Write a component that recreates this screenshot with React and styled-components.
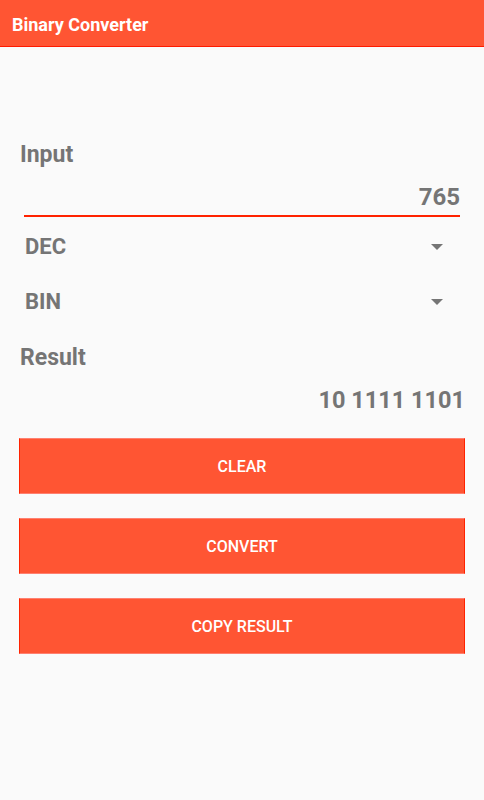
import React from "react";
import styled, { createGlobalStyle } from "styled-components";

const Global = createGlobalStyle`
  html, body { margin: 0; padding: 0; background: #fafafa; }
  body { font-family: Roboto, "Noto Sans", sans-serif; }
  #root { min-height: 800px; background: #fafafa; }
`;

const AppBar = styled.header`
  height: 47px;
  background: #ff5533;
  border-bottom: 1px solid #ff1a00;
  display: flex;
  align-items: center;
  padding: 2px 0 0 12px;
  color: #fff;
  font-size: 18px;
  font-weight: 700;
  box-sizing: border-box;
`;

const Content = styled.main`
  display: flex;
  flex-direction: column;
  padding: 94px 19px 0 19px;
`;

const Label = styled.div`
  color: #757575;
  font-size: 23px;
  font-weight: 700;
  line-height: 28px;
  padding-left: 1px;
  margin-top: ${(p) => p.$top || 0}px;
`;

const InputField = styled.div`
  margin: 14px 5px 2px 5px;
  padding-bottom: 4px;
  border-bottom: 2px solid #ff2200;
  text-align: right;
  color: #757575;
  font-size: 24px;
  font-weight: 700;
  line-height: 28px;
`;

const SelectRow = styled.div`
  display: flex;
  align-items: center;
  justify-content: space-between;
  height: 55px;
  padding: 0 22px 0 6px;
  color: #757575;
  font-size: 22px;
  font-weight: 700;
`;

const Caret = styled.span`
  width: 0;
  height: 0;
  border-left: 6px solid transparent;
  border-right: 6px solid transparent;
  border-top: 6px solid #757575;
`;

const ResultValue = styled.div`
  margin-top: 14px;
  text-align: right;
  color: #757575;
  font-size: 23.5px;
  font-weight: 700;
  line-height: 28px;
`;

const Buttons = styled.div`
  display: flex;
  flex-direction: column;
  gap: 24px;
  margin-top: 24px;
`;

const Button = styled.button`
  height: 56px;
  width: 100%;
  background: #ff5533;
  border: none;
  border-left: 1px solid #ff2200;
  border-right: 1px solid #ff2200;
  border-top: 1px solid #ff8070;
  border-bottom: 1px solid #ff8070;
  color: #fff;
  font-family: Roboto, "Noto Sans", sans-serif;
  font-size: 16px;
  font-weight: 500;
  text-transform: uppercase;
  padding: 0;
`;

export default function App() {
  return (
    <>
      <Global />
      <AppBar>Binary Converter</AppBar>
      <Content>
        <Label>Input</Label>
        <InputField>765</InputField>
        <SelectRow>
          DEC
          <Caret />
        </SelectRow>
        <SelectRow>
          BIN
          <Caret />
        </SelectRow>
        <Label $top={15}>Result</Label>
        <ResultValue>10 1111 1101</ResultValue>
        <Buttons>
          <Button>Clear</Button>
          <Button>Convert</Button>
          <Button>Copy Result</Button>
        </Buttons>
      </Content>
    </>
  );
}
